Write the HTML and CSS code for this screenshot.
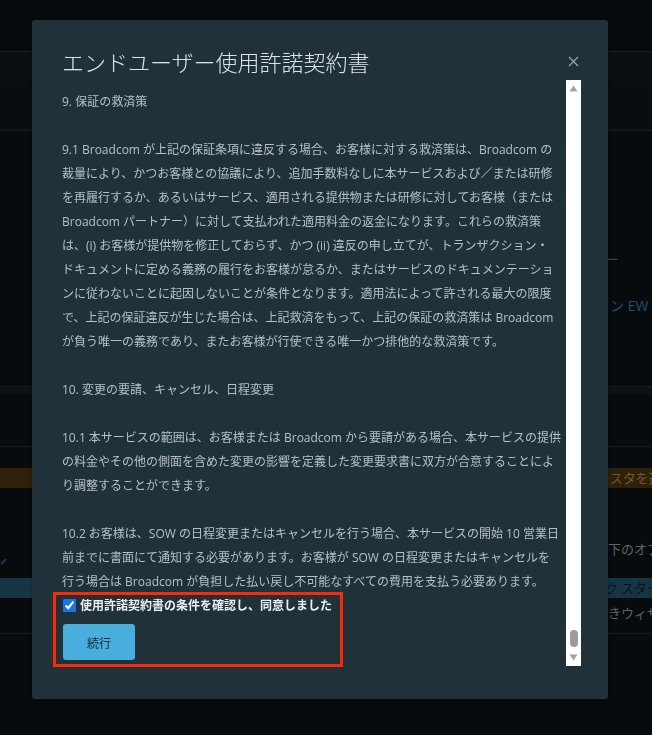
FILE: index.html
```html
<!DOCTYPE html>
<html lang="ja">
<head>
<meta charset="utf-8">
<title>エンドユーザー使用許諾契約書</title>
<link rel="stylesheet" href="styles.css">
</head>
<body>
<div class="page">
  <div class="topbar"></div>
  <div class="subnav"></div>
  <div class="band"></div>
  <div class="main">
    <div class="gap g1"></div>
    <div class="bgrow dash">ー</div>
    <div class="gap g2"></div>
    <div class="bgrow link">ョン EW ます</div>
    <div class="gap g3"></div>
    <div class="rule wide"></div>
    <div class="gap g4"></div>
    <div class="rule"></div>
    <div class="gap g5"></div>
    <div class="bgrow warn">クラスタを選</div>
    <div class="gap g6"></div>
    <div class="bgrow muted">以下のオプ</div>
    <div class="gap g7"></div>
    <div class="bgrow info">ック スタート</div>
    <div class="gap g8"></div>
    <div class="bgrow muted">続きウィザード</div>
    <div class="gap g9"></div>
    <div class="rule"></div>
    <div class="chevron"></div>
  </div>
</div>

<div class="modal" role="dialog" aria-label="エンドユーザー使用許諾契約書">
  <div class="modal-header">
    <h1 class="modal-title">エンドユーザー使用許諾契約書</h1>
    <button class="close" aria-label="閉じる">
      <svg width="15" height="15" viewBox="0 0 15 15"><path d="M3 3 L12 12 M12 3 L3 12" stroke="#9aa7b0" stroke-width="1.2" fill="none"/></svg>
    </button>
  </div>
  <div class="modal-body">
    <div class="eula">
      <p>9. 保証の救済策</p>
      <p>9.1 Broadcom が上記の保証条項に違反する場合、お客様に対する救済策は、Broadcom の<br>裁量により、かつお客様との協議により、追加手数料なしに本サービスおよび／または研修<br>を再履行するか、あるいはサービス、適用される提供物または研修に対してお客様（または<br>Broadcom パートナー）に対して支払われた適用料金の返金になります。これらの救済策<br>は、(i) お客様が提供物を修正しておらず、かつ (ii) 違反の申し立てが、トランザクション・<br>ドキュメントに定める義務の履行をお客様が怠るか、またはサービスのドキュメンテーショ<br>ンに従わないことに起因しないことが条件となります。適用法によって許される最大の限度<br>で、上記の保証違反が生じた場合は、上記救済をもって、上記の保証の救済策は Broadcom<br>が負う唯一の義務であり、またお客様が行使できる唯一かつ排他的な救済策です。</p>
      <p>10. 変更の要請、キャンセル、日程変更</p>
      <p>10.1 本サービスの範囲は、お客様または Broadcom から要請がある場合、本サービスの提供<br>の料金やその他の側面を含めた変更の影響を定義した変更要求書に双方が合意することによ<br>り調整することができます。</p>
      <p class="last">10.2 お客様は、SOW の日程変更またはキャンセルを行う場合、本サービスの開始 10 営業日<br>前までに書面にて通知する必要があります。お客様が SOW の日程変更またはキャンセルを<br>行う場合は Broadcom が負担した払い戻し不可能なすべての費用を支払う必要あります。</p>
      <div class="accept">
        <label class="agree"><input type="checkbox" checked><span>使用許諾契約書の条件を確認し、同意しました</span></label>
        <button class="btn-primary">続行</button>
      </div>
    </div>
    <div class="scrollbar">
      <div class="sb-btn up"><svg width="9" height="7" viewBox="0 0 9 7"><path d="M4.5 0.5 L8.5 6.5 L0.5 6.5 Z" fill="#a2a2a2"/></svg></div>
      <div class="sb-track"><div class="sb-thumb"></div></div>
      <div class="sb-btn down"><svg width="9" height="7" viewBox="0 0 9 7"><path d="M0.5 0.5 L8.5 0.5 L4.5 6.5 Z" fill="#a2a2a2"/></svg></div>
    </div>
  </div>
</div>
</body>
</html>
```

FILE: styles.css
```css
* { box-sizing: border-box; }
html, body { margin: 0; padding: 0; }
body {
  background: #070b0e;
  font-family: "Open Sans", "Noto Sans CJK JP", sans-serif;
  width: 652px;
  height: 735px;
  overflow: hidden;
}

/* dimmed background page */
.page { width: 652px; height: 735px; overflow: hidden; }
.topbar { height: 52px; background: #060a0d; border-bottom: 1px solid #1a2126; }
.subnav { height: 30px; background: #0a0f12; }
.band { height: 49px; background: #090d10; border-bottom: 1px solid #161c20; }
.g1 { height: 118px; }
.g2 { height: 27px; }
.g3 { height: 70px; }
.g4 { height: 52px; }
.g5 { height: 21px; }
.g6 { height: 51px; }
.g7 { height: 19px; }
.g8 { height: 5px; }
.g9 { height: 10px; }
.bgrow {
  height: 20px;
  line-height: 20px;
  font-size: 13px;
  padding-left: 596px;
  white-space: nowrap;
  overflow: hidden;
  font-family: "Noto Sans CJK JP", sans-serif;
}
.dash { color: #2a4556; padding-left: 606px; }
.link { color: #20506e; font-size: 14px; font-family: "Open Sans", "Noto Sans CJK JP", sans-serif; }
.warn { background: #2d2109; color: #75592a; padding-left: 584px; }
.muted { color: #5b646a; padding-left: 595px; }
.info { background: #163544; color: #0a1318; padding-left: 592px; }
.rule { height: 1px; background: #161d22; }
.rule.wide { height: 8px; background: #0c1115; border-top: 1px solid #161d22; }
.chevron {
  width: 7px; height: 7px;
  border-right: 1px solid #1d5a86;
  margin-top: -78px;
  margin-left: -2px;
  transform: rotate(45deg);
}

/* modal */
.modal {
  position: fixed;
  left: 32px;
  top: 20px;
  width: 576px;
  height: 679px;
  background: #21313a;
  border-radius: 3px;
  padding: 27px 27px 0 30px;
  box-shadow: 0 1px 3px rgba(0,0,0,0.4);
}
.modal-header {
  display: flex;
  align-items: center;
  justify-content: space-between;
  height: 28px;
  margin-bottom: 5px;
}
.modal-title {
  margin: 0;
  font-size: 22px;
  line-height: 28px;
  font-weight: 300;
  color: #dde2e5;
  font-family: "Noto Sans CJK JP", sans-serif;
}
.close {
  width: 15px;
  height: 15px;
  padding: 0;
  border: 0;
  background: none;
  display: flex;
}
.modal-body {
  display: flex;
  align-items: flex-start;
  height: 587px;
}
.eula {
  flex: 1;
  padding-top: 10px;
  color: #b7c0c5;
  font-size: 12px;
  line-height: 24px;
}
.eula p {
  margin: 0 0 24px;
  white-space: nowrap;
}
.eula p.last { margin-bottom: 0; }
.accept {
  margin: -2px 0 0 -9px;
  width: 290px;
  border: 3px solid #fb2a06;
  padding: 1px 0 4px 7px;
}
.agree {
  display: flex;
  align-items: center;
  height: 18px;
  gap: 4px;
  color: #eceff0;
  font-weight: 700;
  font-size: 12px;
  font-family: "Noto Sans CJK JP", sans-serif;
}
.agree input {
  margin: 0;
  width: 13px;
  height: 13px;
  accent-color: #1a73e8;
}
.btn-primary {
  display: block;
  margin-top: 10px;
  width: 72px;
  height: 36px;
  border: 0;
  border-radius: 3px;
  background: #49aedb;
  color: #17252d;
  font-size: 12px;
  font-family: "Noto Sans CJK JP", sans-serif;
  padding: 0;
}

/* scrollbar */
.scrollbar {
  width: 15px;
  height: 586px;
  background: #ffffff;
  display: flex;
  flex-direction: column;
}
.sb-btn {
  height: 16px;
  display: flex;
  align-items: center;
  justify-content: center;
}
.sb-btn.down { height: 17px; }
.sb-track {
  flex: 1;
  display: flex;
  flex-direction: column;
  justify-content: flex-end;
  align-items: center;
}
.sb-thumb {
  width: 8px;
  height: 17px;
  border-radius: 4px;
  background: #9c9c9c;
  margin-bottom: 2px;
}
```
